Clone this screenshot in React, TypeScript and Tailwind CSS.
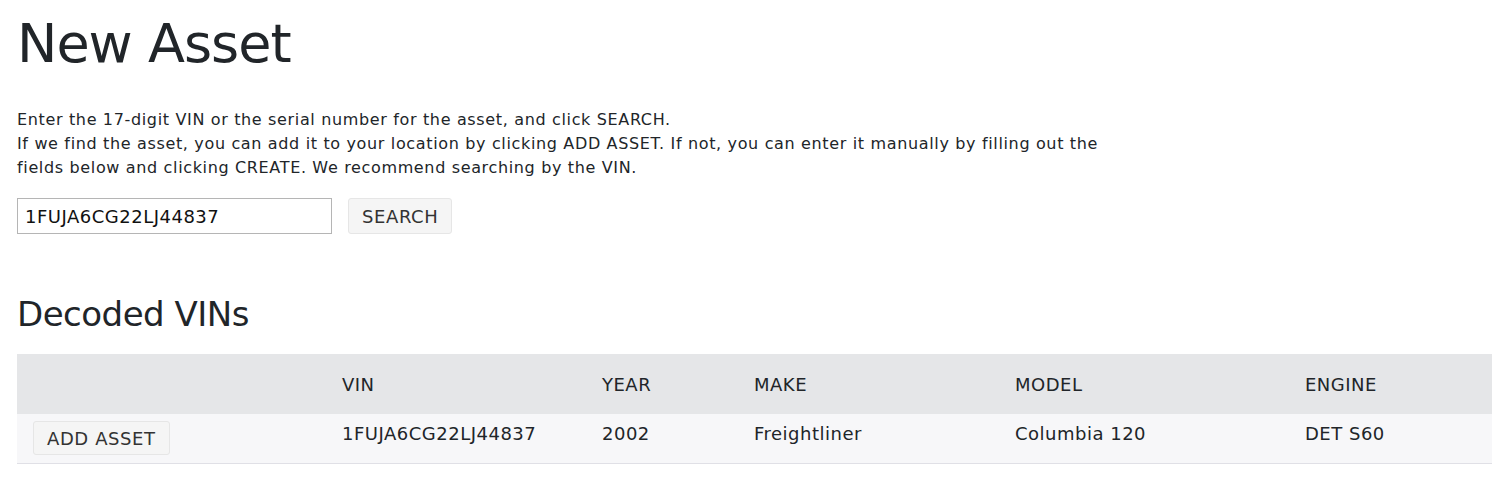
export default function App() {
  const cols = ["", "VIN", "YEAR", "MAKE", "MODEL", "ENGINE"];
  const row = ["1FUJA6CG22LJ44837", "2002", "Freightliner", "Columbia 120", "DET S60"];
  return (
    <div className="min-h-screen bg-white pl-[17px] pr-[11px] text-[#212529] font-['DejaVu_Sans',sans-serif]">
      <h1 className="pt-[8px] text-[54px] leading-[72px] font-normal tracking-[-1px]">New Asset</h1>
      <p className="mt-[28px] text-[16px] leading-[24px] tracking-[0.65px]">
        Enter the 17-digit VIN or the serial number for the asset, and click SEARCH.
        <br />
        If we find the asset, you can add it to your location by clicking ADD ASSET. If not, you can enter it manually by filling out the
        <br />
        fields below and clicking CREATE. We recommend searching by the VIN.
      </p>
      <div className="mt-[18px] flex items-center gap-[16px]">
        <input
          defaultValue="1FUJA6CG22LJ44837"
          className="h-[36px] w-[315px] border border-[#b5b5b5] px-[7px] text-[18px] tracking-[0.5px] text-[#111] outline-none"
        />
        <button className="h-[36px] rounded-[3px] border border-[#e6e6e6] bg-[#f5f5f5] px-[13px] text-[18px] tracking-[0.6px] text-[#333]">
          SEARCH
        </button>
      </div>
      <h2 className="mt-[58px] text-[34px] leading-[44px] font-normal tracking-[-0.5px]">Decoded VINs</h2>
      <table className="mt-[18px] w-full table-fixed border-collapse text-[18px] tracking-[0.5px]">
        <colgroup>
          <col className="w-[309px]" />
          <col className="w-[260px]" />
          <col className="w-[152px]" />
          <col className="w-[261px]" />
          <col className="w-[290px]" />
          <col />
        </colgroup>
        <thead>
          <tr className="h-[60px] bg-[#e5e6e8]">
            {cols.map((c, i) => (
              <th key={i} className="px-[16px] text-left font-normal">
                {c}
              </th>
            ))}
          </tr>
        </thead>
        <tbody>
          <tr className="h-[49px] border-b border-[#e0e0e6] bg-[#f7f7f9] align-top">
            <td className="px-[16px] pt-[7px]">
              <button className="h-[34px] rounded-[3px] border border-[#e6e6e6] bg-[#f5f5f5] px-[13px] text-[18px] tracking-[0.6px] text-[#333]">
                ADD ASSET
              </button>
            </td>
            {row.map((v) => (
              <td key={v} className="px-[16px] pt-[6px]">
                {v}
              </td>
            ))}
          </tr>
        </tbody>
      </table>
    </div>
  );
}
